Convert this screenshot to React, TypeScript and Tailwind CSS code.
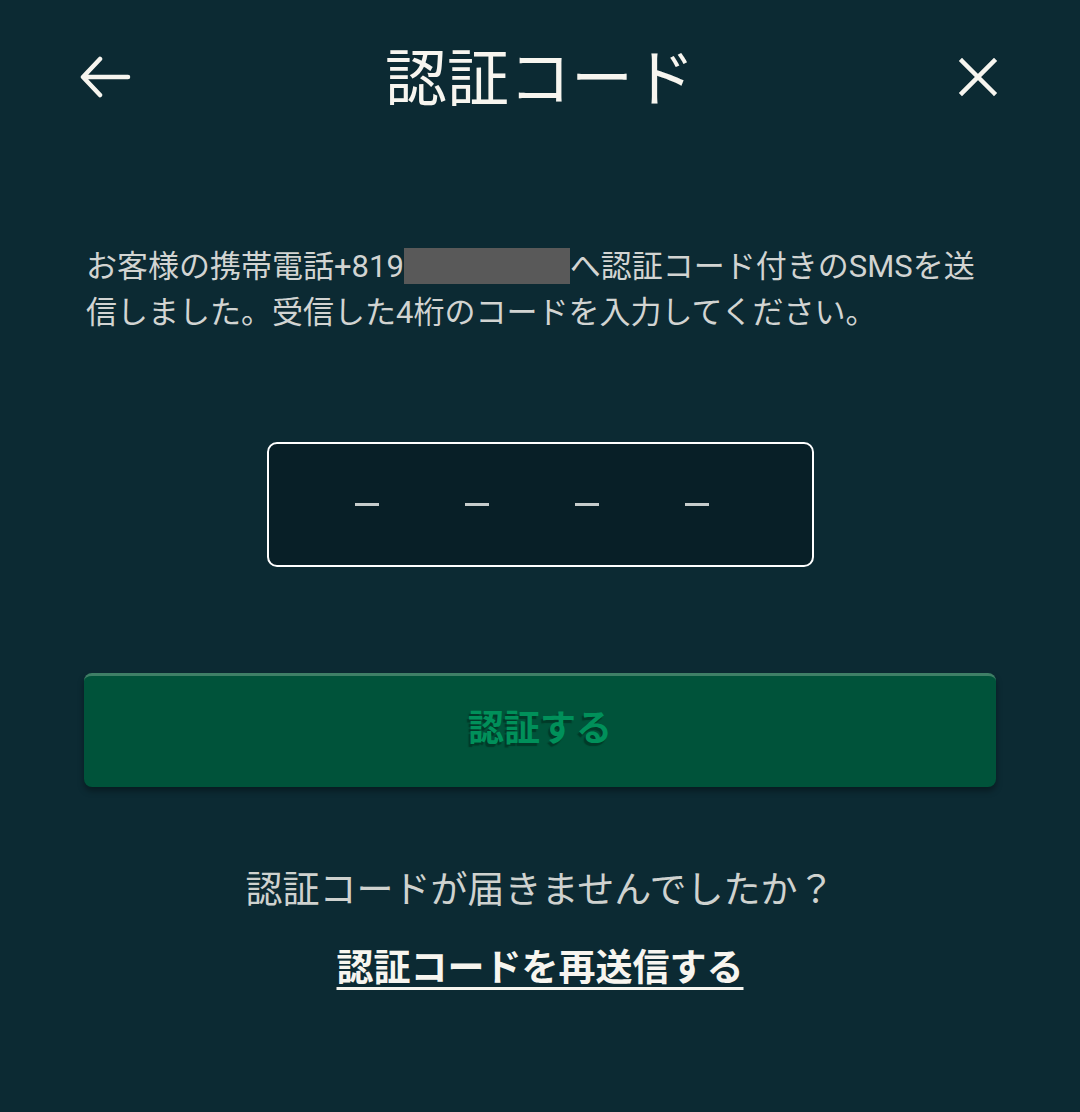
import React from "react";

export default function App() {
  const font = { fontFamily: 'Roboto, "Noto Sans CJK JP", "Noto Sans", sans-serif' };
  return (
    <div className="w-[1080px] h-[1112px] bg-[#0c2a33] text-white flex flex-col" style={font}>
      <div className="h-[154px] flex items-center justify-between pl-[80px] pr-[82px] relative">
        <svg width="52" height="42" viewBox="0 0 52 42" fill="none" stroke="#f7f5ef" strokeWidth="4.5" strokeLinecap="round" strokeLinejoin="round">
          <path d="M48 21H4M20 3L3 21L20 39" />
        </svg>
        <div className="absolute left-0 right-0 top-[40px] text-center text-[62px] leading-[80px] text-[#f7f5ef] pointer-events-none">認証コード</div>
        <svg width="40" height="40" viewBox="0 0 40 40" fill="none" stroke="#f7f5ef" strokeWidth="4.5" strokeLinecap="square">
          <path d="M4 4L36 36M36 4L4 36" />
        </svg>
      </div>
      <div className="pl-[86px] pr-[90px] pt-[90px] text-[31px] leading-[46px] text-[#d2d4d2]">
        お客様の携帯電話+819<span className="inline-block w-[166px] h-[36px] bg-[#595959] align-[-7px]"></span>へ認証コード付きのSMSを送信しました。受信した4桁のコードを入力してください。
      </div>
      <div className="mt-[106px] mx-auto w-[547px] h-[125px] rounded-[10px] border-2 border-white bg-[#081f27] flex items-center pl-[86px] gap-[86px]">
        <div className="w-[24px] h-[3px] bg-[#c6cccc]" />
        <div className="w-[24px] h-[3px] bg-[#c6cccc]" />
        <div className="w-[24px] h-[3px] bg-[#c6cccc]" />
        <div className="w-[24px] h-[3px] bg-[#c6cccc]" />
      </div>
      <div className="mt-[106px] mx-[84px] h-[114px] rounded-[8px] bg-[#00533a] border-t-[3px] border-[#3f7f66] shadow-[0_4px_6px_rgba(0,0,0,0.35)] flex items-center justify-center pb-[6px]">
        <span className="text-[36px] leading-[48px] font-bold text-[#00905a] [text-shadow:-2px_3px_1px_#003a28]">認証する</span>
      </div>
      <div className="mt-[80px] text-center text-[37px] leading-[48px] text-[#cfd2cf]">認証コードが届きませんでしたか？</div>
      <div className="mt-[30px] text-center">
        <span className="text-[37px] leading-[48px] font-bold text-[#f7f5ef] underline decoration-[3px] underline-offset-[6px]">認証コードを再送信する</span>
      </div>
    </div>
  );
}
